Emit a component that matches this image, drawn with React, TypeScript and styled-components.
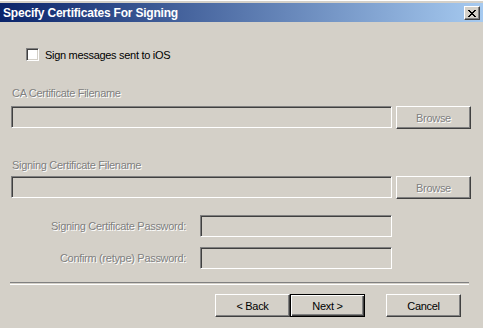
import React from 'react';
import styled, { createGlobalStyle } from 'styled-components';

const GlobalStyle = createGlobalStyle`
  html, body {
    margin: 0;
    padding: 0;
    background: #d4d0c8;
  }
  body {
    font-family: "Liberation Sans", Arial, sans-serif;
    font-size: 11px;
    letter-spacing: -0.3px;
  }
`;

const Window = styled.div`
  width: 483px;
  height: 328px;
  display: flex;
  flex-direction: column;
  background: #d4d0c8;
  overflow: hidden;
`;

const FrameTop = styled.div`
  height: 2px;
  border-top: 1px solid #ffffff;
  background: #d4d0c8;
`;

const TitleBar = styled.div`
  height: 19px;
  display: flex;
  align-items: center;
  justify-content: space-between;
  padding: 0 3px 0 3px;
  background: linear-gradient(to right, #0a246a, #a6caf0);
`;

const Title = styled.span`
  color: #ffffff;
  font-weight: bold;
  font-size: 12px;
  letter-spacing: -0.2px;
`;

const raised = `
  background: #d4d0c8;
  box-sizing: border-box;
  border-top: 1px solid #ffffff;
  border-left: 1px solid #ffffff;
  border-right: 1px solid #404040;
  border-bottom: 1px solid #404040;
  box-shadow: inset -1px -1px 0 #808080;
`;

const sunken = `
  box-sizing: border-box;
  border-top: 1px solid #808080;
  border-left: 1px solid #808080;
  border-right: 1px solid #ffffff;
  border-bottom: 1px solid #ffffff;
  box-shadow: inset 1px 1px 0 #404040, inset -1px -1px 0 #d4d0c8;
`;

const CloseButton = styled.div`
  ${raised}
  width: 16px;
  height: 14px;
  display: flex;
  align-items: center;
  justify-content: center;
  margin-top: 1px;
`;

const Body = styled.div`
  flex: 1;
  display: flex;
  flex-direction: column;
  padding: 0 12px 0 11px;
`;

const CheckRow = styled.label`
  display: flex;
  align-items: center;
  gap: 6px;
  margin: 26px 0 0 15px;
  height: 13px;
  color: #000000;
`;

const CheckBox = styled.span`
  ${sunken}
  width: 13px;
  height: 13px;
  background: #ffffff;
`;

const FieldLabel = styled.div<{ $top: number }>`
  margin-top: ${p => p.$top}px;
  margin-left: 1px;
  height: 13px;
  line-height: 13px;
  color: #808080;
  text-shadow: 1px 1px 0 #ffffff;
`;

const FileRow = styled.div<{ $top: number }>`
  display: flex;
  align-items: flex-start;
  gap: 4px;
  margin-top: ${p => p.$top}px;
`;

const Field = styled.div`
  ${sunken}
  height: 22px;
  background: #d4d0c8;
`;

const FileField = styled(Field)`
  flex: 1;
`;

const Button = styled.div<{ $disabled?: boolean; $default?: boolean }>`
  ${raised}
  width: 75px;
  height: 23px;
  display: flex;
  align-items: center;
  justify-content: center;
  color: ${p => (p.$disabled ? '#808080' : '#000000')};
  text-shadow: ${p => (p.$disabled ? '1px 1px 0 #ffffff' : 'none')};
  ${p =>
    p.$default &&
    `
    border: 1px solid #000000;
    box-shadow: inset 1px 1px 0 #ffffff, inset -1px -1px 0 #404040, inset -2px -2px 0 #808080;
  `}
`;

const PasswordGrid = styled.div`
  display: grid;
  grid-template-columns: 175px 192px;
  column-gap: 14px;
  row-gap: 10px;
  align-items: center;
  margin-top: 16px;
`;

const PasswordLabel = styled.div`
  text-align: right;
  color: #808080;
  text-shadow: 1px 1px 0 #ffffff;
`;

const Separator = styled.div`
  margin: 13px 2px 0 -1px;
  height: 1px;
  border-top: 1px solid #808080;
  border-bottom: 1px solid #ffffff;
`;

const ButtonBar = styled.div`
  display: flex;
  justify-content: flex-end;
  margin: 9px 10px 0 0;
`;

const Spacer = styled.div`
  width: 21px;
`;

const App: React.FC = () => {
  return (
    <Window>
      <GlobalStyle />
      <FrameTop />
      <TitleBar>
        <Title>Specify Certificates For Signing</Title>
        <CloseButton>
          <svg width="8" height="7" viewBox="0 0 8 7" shapeRendering="crispEdges">
            <path
              d="M0 0h2v1h-2zM6 0h2v1h-2zM1 1h2v1h-2zM5 1h2v1h-2zM2 2h4v1h-4zM3 3h2v1h-2zM2 4h4v1h-4zM1 5h2v1h-2zM5 5h2v1h-2zM0 6h2v1h-2zM6 6h2v1h-2z"
              fill="#000000"
            />
          </svg>
        </CloseButton>
      </TitleBar>
      <Body>
        <CheckRow>
          <CheckBox />
          Sign messages sent to iOS
        </CheckRow>
        <FieldLabel $top={26}>CA Certificate Filename</FieldLabel>
        <FileRow $top={6}>
          <FileField />
          <Button $disabled>Browse</Button>
        </FileRow>
        <FieldLabel $top={30}>Signing Certificate Filename</FieldLabel>
        <FileRow $top={4}>
          <FileField />
          <Button $disabled>Browse</Button>
        </FileRow>
        <PasswordGrid>
          <PasswordLabel>Signing Certificate Password:</PasswordLabel>
          <Field />
          <PasswordLabel>Confirm (retype) Password:</PasswordLabel>
          <Field />
        </PasswordGrid>
        <Separator />
        <ButtonBar>
          <Button>&lt; Back</Button>
          <Button $default>Next &gt;</Button>
          <Spacer />
          <Button>Cancel</Button>
        </ButtonBar>
      </Body>
    </Window>
  );
};

export default App;
